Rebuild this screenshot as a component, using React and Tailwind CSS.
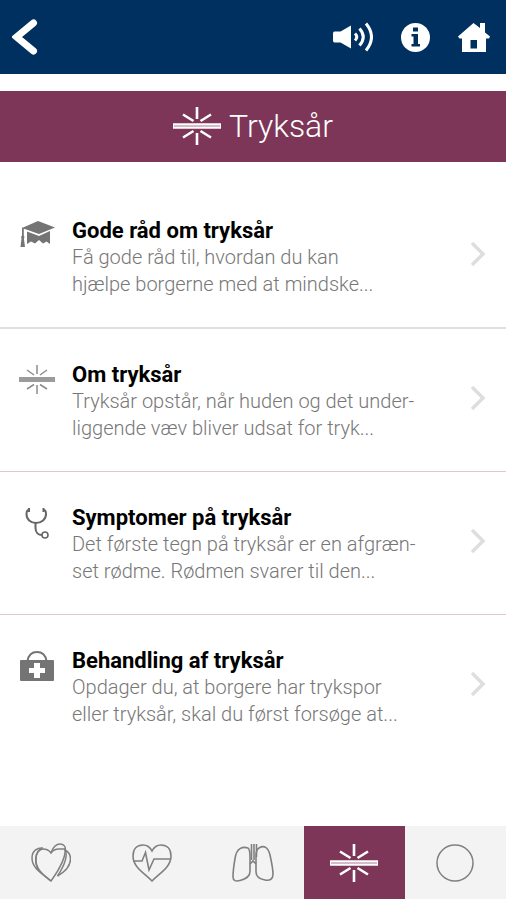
import React from "react";

function Pressure({ className }) {
  return (
    <svg viewBox="0 0 48 38" className={className} fill="none" stroke="currentColor" strokeWidth="2.6" aria-hidden="true">
      <path d="M24 0v12M24 26v12M10 7.500l10.500 6.500M38 7.500L27.500 14M10 30.500l10.500-6.500M38 30.500L27.500 24" />
      <path d="M0 19h48" strokeWidth="5.500" />
      <path d="M1 19h46" strokeWidth="1.500" className="stroke-[#c9a5b6]" />
    </svg>
  );
}

function PressureGray() {
  return (
    <svg viewBox="0 0 36 30" className="h-[30px] w-9 text-[#8c8c8c]" fill="none" stroke="currentColor" strokeWidth="1.500" aria-hidden="true">
      <path d="M18 0v9M18 20v9M8 5l7 5M28 5l-7 5M8 24l7-4.500M28 24l-7-4.500" />
      <path d="M0 14.500h36" strokeWidth="5" className="stroke-[#9b9b9b]" />
    </svg>
  );
}

function Cap() {
  return (
    <svg viewBox="0 0 36 28" className="h-7 w-9 text-[#747474]" fill="currentColor" aria-hidden="true">
      <path d="M19 0L36 6.500 20 13 3 7z" />
      <path d="M8 10.500l12 4.500 11-5v13l-3.500-2.500-3.500 2-4-3.500-4 3.500-4-2L8 23z" />
      <path d="M3 6.500l1.800.7v7.300l.7 1.500-.6 1.500L6 26H1.500l1-8.500L2 16l1-1.500z" />
    </svg>
  );
}

function Stethoscope() {
  return (
    <svg viewBox="0 0 24 32" className="h-8 w-6 text-[#666]" fill="none" stroke="currentColor" aria-hidden="true">
      <path d="M4 2C1.500 2 1.500 4 1.500 6c0 5.500 4 9 9.500 9s10-3.500 10-9c0-2 0-4-2.500-4" strokeWidth="2" />
      <path d="M4 0v4M18.500 0v4" strokeWidth="2" />
      <path d="M10.500 15v5c0 4.500 3 7 6.500 7" strokeWidth="2" />
      <circle cx="20" cy="27" r="3" strokeWidth="1.600" />
    </svg>
  );
}

function Bag() {
  return (
    <svg viewBox="0 0 34 30" className="h-[30px] w-[34px] text-[#747474]" fill="none" aria-hidden="true">
      <path d="M7.500 10C8.500 4 12 1 17 1s8.500 3 9.500 9" stroke="currentColor" strokeWidth="2" />
      <rect y="9" width="34" height="21" rx="1" fill="currentColor" />
      <path d="M14 12h6v5h5v5h-5v5h-6v-5H9v-5h5z" fill="#fff" />
    </svg>
  );
}

const items = [
  { icon: Cap, title: "Gode råd om tryksår", lines: ["Få gode råd til, hvordan du kan", "hjælpe borgerne med at mindske..."] },
  { icon: PressureGray, title: "Om tryksår", lines: ["Tryksår opstår, når huden og det under-", "liggende væv bliver udsat for tryk..."] },
  { icon: Stethoscope, title: "Symptomer på tryksår", lines: ["Det første tegn på tryksår er en afgræn-", "set rødme. Rødmen svarer til den..."] },
  { icon: Bag, title: "Behandling af tryksår", lines: ["Opdager du, at borgere har trykspor", "eller tryksår, skal du først forsøge at..."] },
];

function Item({ icon: Icon, title, lines }) {
  return (
    <li className="border-b border-[#dcc8cd] first:border-b-2 first:border-[#e0dede] last:border-b-0">
      <a href="#" className="flex items-start pt-8 pr-5 pb-[29px] pl-[18px]">
        <span className="mt-1 flex w-[38px] shrink-0 justify-center">
          <Icon />
        </span>
        <span className="ml-4 min-w-0 flex-1 text-xl leading-[27px]">
          <span className="block text-[22px] leading-[27px] font-bold text-black">{title}</span>
          {lines.map((line) => (
            <span key={line} className="block font-light text-[#777]">{line}</span>
          ))}
        </span>
        <svg viewBox="0 0 16 26" className="mt-6 h-[26px] w-4 text-[#dedede]" fill="none" stroke="currentColor" strokeWidth="3.500" aria-hidden="true">
          <path d="M2 2l11 11L2 24" />
        </svg>
      </a>
    </li>
  );
}

function HeartsIcon() {
  return (
    <svg viewBox="0 0 40 40" className="size-10" fill="none" stroke="currentColor" strokeWidth="1.500" aria-hidden="true">
      <path d="M20 38C13 32 5 27 5 17 5 10 7 6 12 6c4 0 6 1 8 4 2-3 5-4 8-4h6c1 8-4 18-14 32z" />
      <path d="M20 38C10 30 1 25 1 15 1 8 6 4.500 12 5" />
      <path d="M7 27C3 18 4 9 11 5.500" />
      <path d="M20 9.500c2-5 5-8.500 9-8.500s6 3 5 6c4 2 5.500 5 5.500 9 0 7-6 13-13 17" />
      <path d="M34.500 7c2 6 0 14-8 26" />
    </svg>
  );
}

function PulseIcon() {
  return (
    <svg viewBox="0 0 40 38" className="h-[38px] w-10" fill="none" stroke="currentColor" strokeWidth="1.600" aria-hidden="true">
      <path d="M20 37C12 29 1 23 1 12 1 5 5 1 11 1c4 0 7 2 9 6 2-4 5-6 9-6 6 0 10 4 10 11 0 11-11 17-19 25z" />
      <path d="M1 17h9l3.500-8.500L17 26l5-11h17" />
    </svg>
  );
}

function LungsIcon() {
  return (
    <svg viewBox="0 0 42 38" className="h-[38px] w-[42px]" fill="none" stroke="currentColor" strokeWidth="1.600" aria-hidden="true">
      <path d="M16 4C10 2 5 5 3.500 12 2 20 1 27 1 33c0 4 3 4.500 7 3.500 6-1.500 10-5 10-9V14c0-5 0-9-2-10z" />
      <path d="M27 4c5-3 9-1 11 7 2 9 3 14 3 19 0 5-3 7-8 6-5-1-9-3-9-8V12c0-4 1-7 3-8z" />
      <path d="M19.500 0v16M22 0v16M24.500 0v13" />
      <path d="M18 20l3-3 3 3" />
    </svg>
  );
}

function CircleIcon() {
  return (
    <svg viewBox="0 0 38 38" className="size-[38px]" fill="none" stroke="currentColor" strokeWidth="1.500" aria-hidden="true">
      <circle cx="19" cy="19" r="18" />
    </svg>
  );
}

const tabs = [
  { label: "Hjerte", icon: <HeartsIcon /> },
  { label: "Puls", icon: <PulseIcon /> },
  { label: "Lunger", icon: <LungsIcon /> },
  { label: "Tryksår", icon: <Pressure className="h-[38px] w-12" />, active: true },
  { label: "Mere", icon: <CircleIcon /> },
];

export default function App() {
  return (
    <div className="flex min-h-screen flex-col bg-white font-[Roboto,sans-serif]">
      <header className="flex h-[74px] items-center bg-[#003060] pr-4 pl-3 text-white">
        <button type="button" aria-label="Tilbage">
          <svg viewBox="0 0 26 36" className="h-9 w-[26px]" fill="none" stroke="currentColor" strokeWidth="7" strokeLinecap="round" aria-hidden="true">
            <path d="M21.500 4L4.500 18l17 14" />
          </svg>
        </button>
        <div className="ml-auto flex items-center gap-7">
          <button type="button" aria-label="Læs op">
            <svg viewBox="0 0 41 30" className="h-[30px] w-[41px]" fill="currentColor" aria-hidden="true">
              <path d="M2.500 9.500h6L19 3.500v23L8.500 20.500h-6Q1 20.500 1 18.500v-7Q1 9.500 2.500 9.500z" />
              <path d="M23 11.500q3.500 3.500 0 7M27.500 6.500q7.500 8.500 0 17M34 1.500q11 13.500 0 27" fill="none" stroke="currentColor" strokeWidth="3" />
            </svg>
          </button>
          <button type="button" aria-label="Information">
            <svg viewBox="0 0 29 29" className="size-[29px]" aria-hidden="true">
              <circle cx="14.500" cy="14.500" r="14.500" fill="currentColor" />
              <path d="M12 4.500h5v4h-5zM10.500 11H17v10h2v2.500h-8.500V21h2v-7.500h-2z" fill="#003060" />
            </svg>
          </button>
          <button type="button" aria-label="Hjem">
            <svg viewBox="0 0 32 30" className="h-[30px] w-8" fill="currentColor" fillRule="evenodd" aria-hidden="true">
              <path d="M15.500 1L22 6V1h5v9.500l5 4-1 2h-3V30H4V16.500H1.500L0 14.500zM12.500 18v8.500H19V18z" />
            </svg>
          </button>
        </div>
      </header>

      <div className="mt-[17px] flex h-[71px] items-center justify-center gap-2 bg-[#7d3658] pb-px text-white">
        <Pressure className="h-[38px] w-12" />
        <h1 className="text-[32px] leading-10 font-light">Tryksår</h1>
      </div>

      <main className="flex-1 pt-[23px]">
        <ul>
          {items.map((item) => (
            <Item key={item.title} {...item} />
          ))}
        </ul>
      </main>

      <nav className="mb-px grid h-[73px] grid-cols-5 bg-[#f3f3f3] text-[#808080]">
        {tabs.map((tab) => (
          <a
            key={tab.label}
            href="#"
            aria-label={tab.label}
            aria-current={tab.active ? "page" : undefined}
            className="flex items-center justify-center aria-[current=page]:bg-[#7d3658] aria-[current=page]:text-white"
          >
            {tab.icon}
          </a>
        ))}
      </nav>
    </div>
  );
}
